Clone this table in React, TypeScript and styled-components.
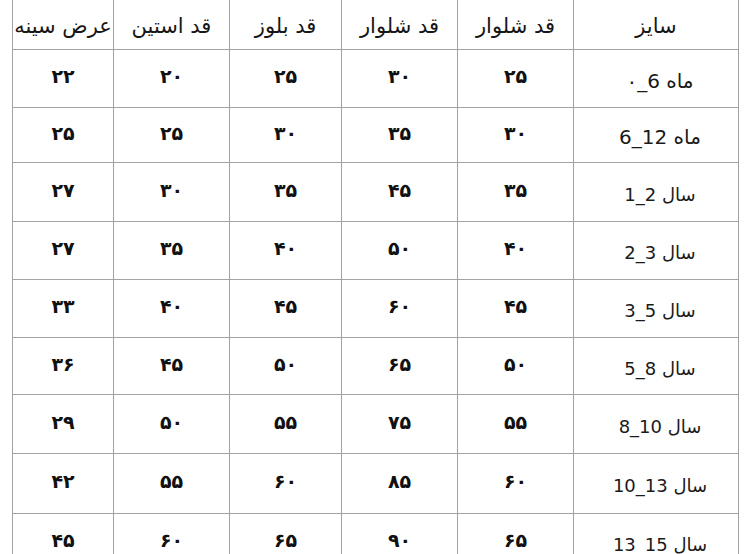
import React from "react";
import styled, { createGlobalStyle } from "styled-components";

const Global = createGlobalStyle`
  html, body { margin: 0; padding: 0; background: #ffffff; }
  body { font-family: "DejaVu Sans", "Noto Sans", sans-serif; color: #141414; }
`;

const Page = styled.div`
  width: 750px;
  height: 554px;
  overflow: hidden;
  padding-left: 12px;
  box-sizing: border-box;
  background: #fff;
`;

const Table = styled.table`
  direction: rtl;
  border-collapse: collapse;
  table-layout: fixed;
  width: 726px;
  margin-top: -1px;
`;

const Col = styled.col<{ $w: number }>`
  width: ${(p) => p.$w}px;
`;

const HeadCell = styled.th`
  height: 50px;
  box-sizing: border-box;
  border: 1px solid #a3a3a3;
  font-family: "DejaVu Sans", sans-serif;
  font-weight: 400;
  font-size: 21px;
  color: #161616;
  text-align: center;
  vertical-align: middle;
  padding: 2px 0 0 0;
  white-space: nowrap;
`;

const Row = styled.tr<{ $h: number }>`
  height: ${(p) => p.$h}px;
`;

const SizeCell = styled.td`
  border: 1px solid #a3a3a3;
  text-align: center;
  vertical-align: middle;
  font-family: "DejaVu Sans", sans-serif;
  font-size: 18px;
  color: #1a1a1a;
  padding: 4px 0 0 0;
  white-space: nowrap;
`;

const SizeText = styled.span<{ $big?: boolean }>`
  direction: ltr;
  unicode-bidi: isolate;
  display: inline-block;
  font-size: ${(p) => (p.$big ? "20px" : "18px")};
  padding-left: 8px;
`;

const NumCell = styled.td`
  border: 1px solid #a3a3a3;
  text-align: center;
  vertical-align: middle;
  font-family: "DejaVu Sans", sans-serif;
  font-weight: 700;
  font-size: 19px;
  color: #111;
  padding: 0 0 5px 0;
`;

const headers = ["سایز", "قد شلوار", "قد شلوار", "قد بلوز", "قد استین", "عرض سینه"];
const widths = [165, 116, 116, 112, 116, 101];

type R = { size: string; big?: boolean; h: number; v: string[] };

const rows: R[] = [
  { size: "۰_6  ماه", big: true, h: 58, v: ["۲۵", "۳۰", "۲۵", "۲۰", "۲۲"] },
  { size: "6_12  ماه", big: true, h: 55, v: ["۳۰", "۳۵", "۳۰", "۲۵", "۲۵"] },
  { size: "1_2 سال", h: 59, v: ["۳۵", "۴۵", "۳۵", "۳۰", "۲۷"] },
  { size: "2_3 سال", h: 58, v: ["۴۰", "۵۰", "۴۰", "۳۵", "۲۷"] },
  { size: "3_5 سال", h: 58, v: ["۴۵", "۶۰", "۴۵", "۴۰", "۳۳"] },
  { size: "5_8 سال", h: 57, v: ["۵۰", "۶۵", "۵۰", "۴۵", "۳۶"] },
  { size: "8_10 سال", h: 59, v: ["۵۵", "۷۵", "۵۵", "۵۰", "۲۹"] },
  { size: "10_13 سال", h: 60, v: ["۶۰", "۸۵", "۶۰", "۵۵", "۴۲"] },
  { size: "13_15 سال", h: 58, v: ["۶۵", "۹۰", "۶۵", "۶۰", "۴۵"] },
];

export default function App() {
  return (
    <Page>
      <Global />
      <Table>
        <colgroup>
          {widths.map((w, i) => (
            <Col key={i} $w={w} />
          ))}
        </colgroup>
        <thead>
          <tr>
            {headers.map((h, i) => (
              <HeadCell key={i}>{h}</HeadCell>
            ))}
          </tr>
        </thead>
        <tbody>
          {rows.map((r, i) => (
            <Row key={i} $h={r.h}>
              <SizeCell>
                <SizeText $big={r.big}>{r.size}</SizeText>
              </SizeCell>
              {r.v.map((n, j) => (
                <NumCell key={j}>{n}</NumCell>
              ))}
            </Row>
          ))}
        </tbody>
      </Table>
    </Page>
  );
}
